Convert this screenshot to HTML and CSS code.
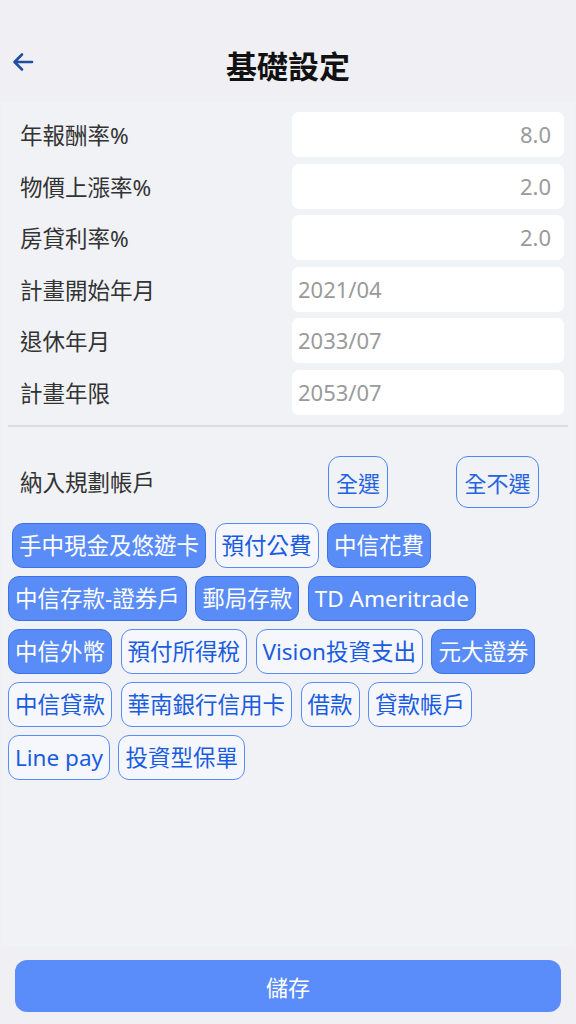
FILE: index.html
```html
<!DOCTYPE html>
<html lang="zh-Hant">
<head>
<meta charset="utf-8">
<title>基礎設定</title>
<link rel="stylesheet" href="styles.css">
</head>
<body>
<div class="app">
  <header class="topbar">
    <span class="back">
      <svg width="22" height="22" viewBox="0 0 22 22"><path d="M20 11H3M10 3.5L2.5 11L10 18.5" fill="none" stroke="#1f4fa3" stroke-width="2.6" stroke-linecap="round" stroke-linejoin="round"/></svg>
    </span>
    <h1 class="title">基礎設定</h1>
    <span class="spacer"></span>
  </header>
  <main class="content">
    <div class="form">
      <div class="row"><span class="label">年報酬率%</span><div class="input num">8.0</div></div>
      <div class="row"><span class="label">物價上漲率%</span><div class="input num">2.0</div></div>
      <div class="row"><span class="label">房貸利率%</span><div class="input num">2.0</div></div>
      <div class="row"><span class="label">計畫開始年月</span><div class="input">2021/04</div></div>
      <div class="row"><span class="label">退休年月</span><div class="input">2033/07</div></div>
      <div class="row"><span class="label">計畫年限</span><div class="input">2053/07</div></div>
    </div>
    <hr class="divider">
    <div class="acct-head">
      <span class="label acct-label">納入規劃帳戶</span>
      <button class="sel-btn">全選</button>
      <button class="sel-btn none">全不選</button>
    </div>
    <div class="chips">
      <span class="chip on first">手中現金及悠遊卡</span>
      <span class="chip">預付公費</span>
      <span class="chip on">中信花費</span>
      <span class="chip on">中信存款-證券戶</span>
      <span class="chip on">郵局存款</span>
      <span class="chip on">TD Ameritrade</span>
      <span class="chip on">中信外幣</span>
      <span class="chip">預付所得稅</span>
      <span class="chip">Vision投資支出</span>
      <span class="chip on">元大證券</span>
      <span class="chip">中信貸款</span>
      <span class="chip">華南銀行信用卡</span>
      <span class="chip">借款</span>
      <span class="chip">貸款帳戶</span>
      <span class="chip">Line pay</span>
      <span class="chip">投資型保單</span>
    </div>
  </main>
  <footer class="footer">
    <button class="save">儲存</button>
  </footer>
</div>
</body>
</html>
```

FILE: styles.css
```css
* { box-sizing: border-box; }
html, body {
  margin: 0;
  padding: 0;
  background: #efeff4;
  font-family: "Noto Sans", "Noto Sans CJK TC", sans-serif;
}
.app {
  width: 576px;
  height: 1024px;
  display: flex;
  flex-direction: column;
}
.topbar {
  height: 102px;
  padding: 30px 0 0 0;
  display: grid;
  grid-template-columns: 1fr auto 1fr;
  align-items: center;
}
.back {
  padding-left: 12px;
  margin-top: -8px;
  display: flex;
  align-items: center;
}
.title {
  margin: 0;
  font-size: 31px;
  font-weight: 700;
  color: #111;
  line-height: 1;
}
.content {
  height: 845px;
  margin: 0 1px;
  background: #f0f2f6;
  padding-top: 10px;
}
.form {
  display: flex;
  flex-direction: column;
  gap: 6.6px;
}
.row {
  display: flex;
  align-items: center;
  height: 45px;
  padding: 0 11px 0 19px;
}
.label {
  flex: 1;
  font-size: 22.5px;
  color: #333;
}
.input {
  width: 272px;
  height: 45px;
  background: #fff;
  border-radius: 7px;
  font-size: 22px;
  line-height: 45px;
  color: #9a9a9a;
  padding: 0 13px 0 6px;
}
.input.num { text-align: right; }
.divider {
  margin: 10px 7px 0 7px;
  border: 0;
  height: 2px;
  background: #d9dce2;
}
.acct-head {
  display: flex;
  align-items: center;
  padding-left: 19px;
  margin-top: 29px;
}
.acct-label { flex: 0 0 308px; }
.sel-btn {
  height: 52px;
  border: 1px solid #5285f0;
  border-radius: 12px;
  background: transparent;
  color: #2563e0;
  font-family: "Noto Sans", "Noto Sans CJK TC", sans-serif;
  font-size: 22px;
  padding: 0;
  width: 60px;
  white-space: nowrap;
}
.sel-btn.none { width: 83px; margin-left: 68px; }
.chips {
  display: flex;
  flex-wrap: wrap;
  gap: 8px 8.5px;
  padding: 15px 7px 0 7px;
}
.chip {
  height: 45px;
  line-height: 43px;
  font-size: 22.5px;
  padding: 0 6px;
  border: 1px solid #5a8cf8;
  border-radius: 11px;
  background: #f5f7fc;
  color: #1a5ce0;
  white-space: nowrap;
}
.chip.on {
  background: #5a8cf8;
  border-color: #3b72e6;
  color: #fff;
}
.chip.first { margin-left: 4px; }
.footer {
  padding: 13px 15px 12px 15px;
}
.save {
  width: 100%;
  height: 52px;
  border: 0;
  border-radius: 12px;
  background: #5a8dfa;
  color: #fff;
  font-family: "Noto Sans", "Noto Sans CJK TC", sans-serif;
  font-size: 22px;
}
```
